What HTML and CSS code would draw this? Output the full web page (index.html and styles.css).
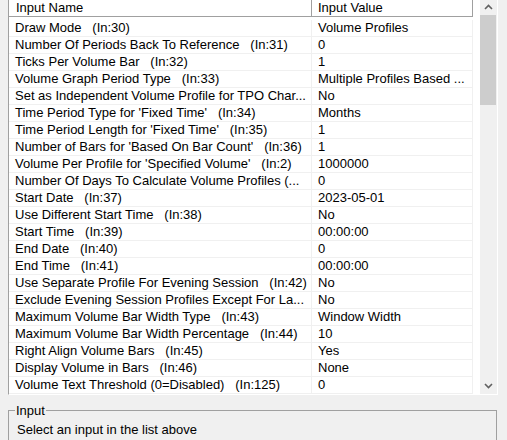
FILE: index.html
```html
<!DOCTYPE html>
<html lang="en">

<head>
    <meta charset="UTF-8">
    <title>Indicator Inputs</title>
    <link rel="stylesheet" href="styles.css">
</head>

<body>
    <div class="list">
        <div class="table">
            <div class="head">
                <div class="hcell">Input Name</div>
                <div class="hcell">Input Value</div>
            </div>
            <div class="rows">
                <div class="row"><div class="cell">Draw Mode   (In:30)</div><div class="cell">Volume Profiles</div></div>
                <div class="row"><div class="cell">Number Of Periods Back To Reference   (In:31)</div><div class="cell">0</div></div>
                <div class="row"><div class="cell">Ticks Per Volume Bar   (In:32)</div><div class="cell">1</div></div>
                <div class="row"><div class="cell">Volume Graph Period Type   (In:33)</div><div class="cell">Multiple Profiles Based ...</div></div>
                <div class="row"><div class="cell">Set as Independent Volume Profile for TPO Char...</div><div class="cell">No</div></div>
                <div class="row"><div class="cell">Time Period Type for 'Fixed Time'   (In:34)</div><div class="cell">Months</div></div>
                <div class="row"><div class="cell">Time Period Length for 'Fixed Time'   (In:35)</div><div class="cell">1</div></div>
                <div class="row"><div class="cell">Number of Bars for 'Based On Bar Count'   (In:36)</div><div class="cell">1</div></div>
                <div class="row"><div class="cell">Volume Per Profile for 'Specified Volume'   (In:2)</div><div class="cell">1000000</div></div>
                <div class="row"><div class="cell">Number Of Days To Calculate Volume Profiles (...</div><div class="cell">0</div></div>
                <div class="row"><div class="cell">Start Date   (In:37)</div><div class="cell">2023-05-01</div></div>
                <div class="row"><div class="cell">Use Different Start Time   (In:38)</div><div class="cell">No</div></div>
                <div class="row"><div class="cell">Start Time   (In:39)</div><div class="cell">00:00:00</div></div>
                <div class="row"><div class="cell">End Date   (In:40)</div><div class="cell">0</div></div>
                <div class="row"><div class="cell">End Time   (In:41)</div><div class="cell">00:00:00</div></div>
                <div class="row"><div class="cell">Use Separate Profile For Evening Session   (In:42)</div><div class="cell">No</div></div>
                <div class="row"><div class="cell">Exclude Evening Session Profiles Except For La...</div><div class="cell">No</div></div>
                <div class="row"><div class="cell">Maximum Volume Bar Width Type   (In:43)</div><div class="cell">Window Width</div></div>
                <div class="row"><div class="cell">Maximum Volume Bar Width Percentage   (In:44)</div><div class="cell">10</div></div>
                <div class="row"><div class="cell">Right Align Volume Bars   (In:45)</div><div class="cell">Yes</div></div>
                <div class="row"><div class="cell">Display Volume in Bars   (In:46)</div><div class="cell">None</div></div>
                <div class="row"><div class="cell">Volume Text Threshold (0=Disabled)   (In:125)</div><div class="cell">0</div></div>
            </div>
        </div>
        <div class="scrollbar">
            <div class="arrow up">
                <svg width="9" height="6" viewBox="0 0 9 6"><path d="M1 5 L4.5 1.5 L8 5" fill="none" stroke="#606060" stroke-width="1.6"/></svg>
            </div>
            <div class="thumb"></div>
            <div class="track"></div>
            <div class="arrow down">
                <svg width="9" height="6" viewBox="0 0 9 6"><path d="M1 1 L4.5 4.5 L8 1" fill="none" stroke="#606060" stroke-width="1.6"/></svg>
            </div>
        </div>
    </div>

    <fieldset class="group">
        <legend>Input</legend>
        <p>Select an input in the list above</p>
    </fieldset>
</body>

</html>
```

FILE: styles.css
```css
* {
    margin: 0;
    padding: 0;
    box-sizing: border-box;
}

body {
    background: #f0f0f0;
    font-family: "Liberation Sans", Arial, sans-serif;
    font-size: 13px;
    color: #000;
    height: 440px;
    overflow: hidden;
}

.list {
    display: flex;
    margin-left: 8px;
    width: 490px;
    height: 395px;
    background: #fff;
    border-left: 1px solid #a0a0a0;
    border-right: 1px solid #fff;
    border-bottom: 1px solid #fff;
}

.table {
    flex: 1;
    overflow: hidden;
}

.head,
.row {
    display: grid;
    grid-template-columns: 303px 161px;
}

.hcell {
    height: 17px;
    line-height: 16px;
    padding-left: 7px;
    background: #fff;
    border-right: 1px solid #a0a0a0;
    border-bottom: 1px solid #a0a0a0;
}

.hcell + .hcell {
    padding-left: 6px;
}

.rows {
    margin-top: 3px;
}

.row {
    height: 17px;
}

.cell {
    line-height: 16px;
    padding-left: 6px;
    white-space: pre;
    overflow: hidden;
    border-right: 1px solid #f0f0f0;
    border-bottom: 1px solid #f0f0f0;
}

.scrollbar {
    width: 17px;
    display: flex;
    flex-direction: column;
    background: #f0f0f0;
}

.arrow {
    display: flex;
    justify-content: center;
    align-items: center;
}

.arrow.up {
    height: 15px;
    padding-bottom: 2px;
}

.arrow.down {
    height: 17px;
}

.thumb {
    height: 90px;
    margin: 0 1px 0 0;
    background: #cdcdcd;
}

.track {
    flex: 1;
}

.group {
    margin: 8px 0 0 8px;
    width: 489px;
    height: 60px;
    border: 1px solid #a0a0a0;
    padding: 4px 8px 0 8px;
}

.group legend {
    margin-left: -2px;
    padding: 0 1px;
    line-height: 15px;
}

.group p {
    line-height: 15px;
}
```
